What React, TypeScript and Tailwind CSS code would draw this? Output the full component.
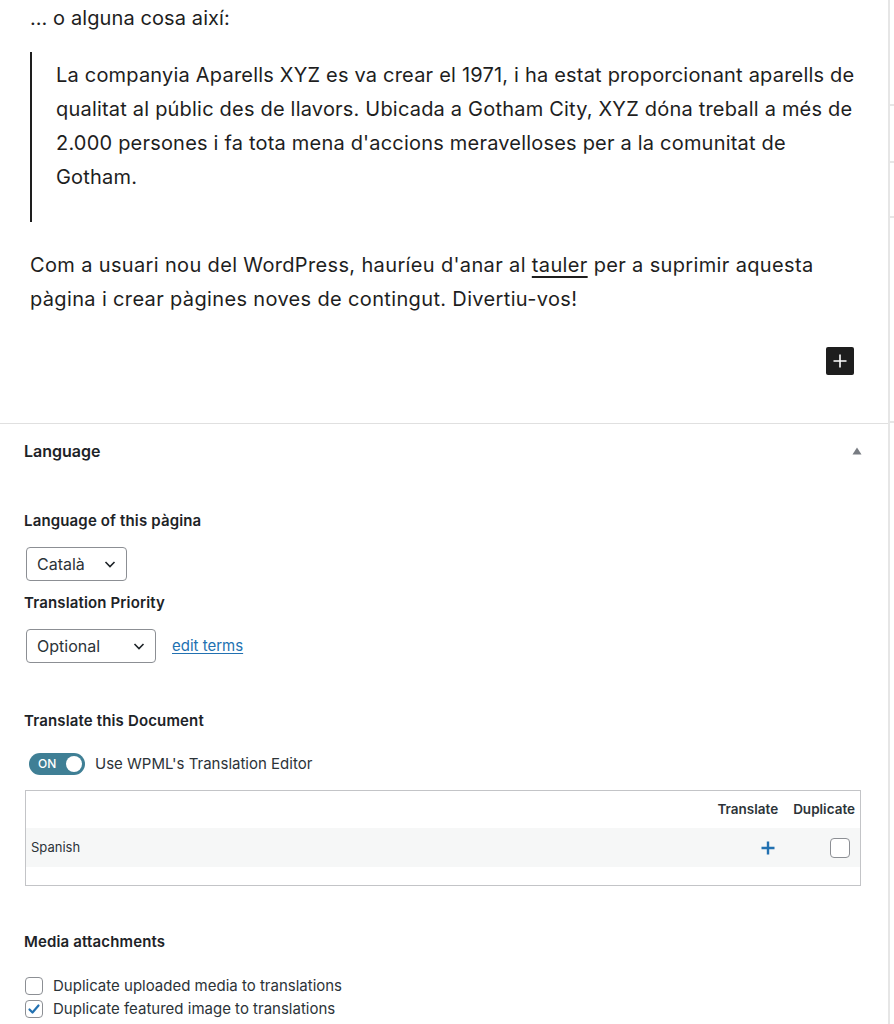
import React from 'react';

const editorFont = { fontFamily: 'Inter, "Liberation Sans", sans-serif' };

const Chevron = () => (
  <svg width="16" height="16" viewBox="0 0 16 16" className="text-[#1d2327]">
    <path d="M3.5 6l4.5 4.5L12.5 6" fill="none" stroke="currentColor" strokeWidth="1.6" />
  </svg>
);

const SelectBox = ({ value, width }: { value: string; width: string }) => (
  <div
    className={`${width} h-[34px] flex items-center justify-between pl-[10px] pr-[8px] border border-[#8c8f94] rounded-[4px] bg-white text-[16px] text-[#2c3338]`}
  >
    <span>{value}</span>
    <Chevron />
  </div>
);

const Checkbox = ({ checked = false, size = 'w-[18px] h-[18px]' }: { checked?: boolean; size?: string }) => (
  <span
    className={`${size} shrink-0 flex items-center justify-center border border-[#8c8f94] rounded-[4px] bg-white`}
  >
    {checked && (
      <svg width="14" height="14" viewBox="0 0 14 14">
        <path d="M2.5 7.5l3 3 6-7" fill="none" stroke="#2271b1" strokeWidth="2.2" strokeLinecap="round" strokeLinejoin="round" />
      </svg>
    )}
  </span>
);

export default function App() {
  return (
    <div className="flex w-full min-h-[1024px] bg-white" style={{ fontFamily: 'Inter, "Noto Sans", sans-serif' }}>
      <div className="w-[888px] shrink-0 flex flex-col">
        {/* Editor content */}
        <div className="h-[424px] border-b border-[#e0e0e0] pl-[30px] pr-[20px] pt-[1px] text-[#1e1e1e] whitespace-nowrap" style={editorFont}>
          <p className="text-[20px] leading-[34px] tracking-[0.1px]">… o alguna cosa així:</p>
          <blockquote className="mt-[17px] border-l-2 border-[#1e1e1e] pl-[24px] pt-[6px] pb-[28px] text-[20px] leading-[34px] tracking-[0.2px]">
            La companyia Aparells XYZ es va crear el 1971, i ha estat proporcionant aparells de
            <br />
            qualitat al públic des de llavors. Ubicada a Gotham City, XYZ dóna treball a més de
            <br />
            2.000 persones i fa tota mena d'accions meravelloses per a la comunitat de
            <br />
            Gotham.
          </blockquote>
          <p className="mt-[26px] text-[20px] leading-[34px] tracking-[0.35px]">
            Com a usuari nou del WordPress, hauríeu d'anar al{' '}
            <span className="underline underline-offset-4">tauler</span> per a suprimir aquesta
            <br />
            pàgina i crear pàgines noves de contingut. Divertiu-vos!
          </p>
          <div className="flex justify-end mt-[31px] pr-[14px]">
            <button className="w-[28px] h-[28px] bg-[#1e1e1e] rounded-[2px] flex items-center justify-center">
              <svg width="18" height="18" viewBox="0 0 18 18">
                <path d="M9 2.5v13M2.5 9h13" stroke="white" strokeWidth="1.6" />
              </svg>
            </button>
          </div>
        </div>

        {/* Language metabox */}
        <div className="pl-[24px] pr-[28px] text-[#1d2327]">
          <div className="h-[54px] flex items-center justify-between">
            <span className="text-[16px] font-semibold">Language</span>
            <svg width="10" height="8" viewBox="0 0 10 8" className="mr-[-2px]">
              <path d="M5 0.5L9.5 7.5H0.5z" fill="#787c82" />
            </svg>
          </div>

          <div className="pt-[32px] text-[15px] tracking-[0.15px] font-semibold">Language of this pàgina</div>
          <div className="mt-[14px] pl-[2px]">
            <SelectBox value="Català" width="w-[101px]" />
          </div>
          <div className="mt-[11px] text-[15px] tracking-[0.15px] font-semibold">Translation Priority</div>
          <div className="mt-[15px] pl-[2px] flex items-center gap-[16px]">
            <SelectBox value="Optional" width="w-[130px]" />
            <a className="text-[15px] text-[#2271b1] underline underline-offset-2">edit terms</a>
          </div>

          <div className="mt-[47px] text-[15px] tracking-[0.15px] font-semibold">Translate this Document</div>
          <div className="mt-[20px] flex items-center gap-[10px] pl-[5px]">
            <div className="w-[56px] h-[22px] rounded-full bg-[#3f7f95] flex items-center justify-between pl-[9px] pr-[3px]">
              <span className="text-[12px] text-white font-medium">ON</span>
              <span className="w-[16px] h-[16px] rounded-full bg-white" />
            </div>
            <span className="text-[15px] text-[#2c3338]">Use WPML's Translation Editor</span>
          </div>

          <div className="mt-[15px] ml-[1px] w-[836px] border border-[#c3c4c7]">
            <div className="h-[37px] flex items-center justify-end gap-[15px] pr-[5px] text-[13.5px] font-semibold text-[#2c3338]">
              <span>Translate</span>
              <span>Duplicate</span>
            </div>
            <div className="h-[39px] bg-[#f6f7f7] flex items-center pl-[5px] pr-[10px] text-[13px] text-[#2c3338]">
              <span className="flex-1">Spanish</span>
              <svg width="16" height="16" viewBox="0 0 16 16" className="mr-[54px]">
                <path d="M8 1.5v13M1.5 8h13" stroke="#2271b1" strokeWidth="2.4" />
              </svg>
              <Checkbox size="w-[20px] h-[20px]" />
            </div>
            <div className="h-[18px]" />
          </div>

          <div className="mt-[45px] text-[15px] tracking-[0.15px] font-semibold">Media attachments</div>
          <div className="mt-[22px] flex flex-col gap-[3px] text-[15px] leading-[20px] text-[#2c3338]">
            <label className="flex items-center gap-[10px] ml-[1px]">
              <Checkbox />
              <span>Duplicate uploaded media to translations</span>
            </label>
            <label className="flex items-center gap-[10px] ml-[1px]">
              <Checkbox checked />
              <span>Duplicate featured image to translations</span>
            </label>
          </div>
        </div>
      </div>
      <div className="w-[2px] shrink-0 bg-[#e6e6e6]" />
      <div className="flex-1 flex flex-col">
        <div className="h-[104px]" />
        <div className="h-[2px] bg-[#e6e6e6]" />
        <div className="h-[55px]" />
        <div className="h-[2px] bg-[#e6e6e6]" />
        <div className="h-[53px]" />
        <div className="h-[2px] bg-[#e6e6e6]" />
        <div className="h-[203px]" />
        <div className="h-[2px] bg-[#e6e6e6]" />
      </div>
    </div>
  );
}
